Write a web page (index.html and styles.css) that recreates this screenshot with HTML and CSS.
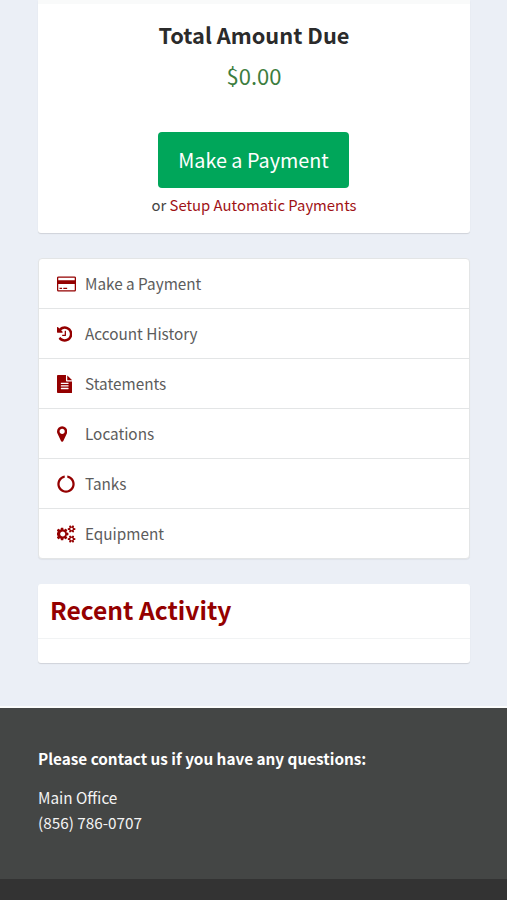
FILE: index.html
```
<!DOCTYPE html>
<html lang="en">
<head>
  <meta charset="UTF-8">
  <meta name="viewport" content="width=device-width, initial-scale=1.0">
  <title>My Account</title>
  <link rel="stylesheet" href="styles.css">
</head>
<body>
  <main class="content">
    <section class="box amount-box">
      <h3>Total Amount Due</h3>
      <p class="amount">$0.00</p>
      <a href="#" class="btn-pay">Make a Payment</a>
      <p class="auto-pay">or <a href="#">Setup Automatic Payments</a></p>
    </section>

    <nav class="account-menu">
      <a href="#">
        <span class="icon"><svg width="19" height="18" viewBox="0 0 1920 1792"><path d="M1760 128q66 0 113 47t47 113v1216q0 66-47 113t-113 47h-1600q-66 0-113-47t-47-113v-1216q0-66 47-113t113-47h1600zm-1600 128q-13 0-22.500 9.500t-9.500 22.500v224h1664v-224q0-13-9.500-22.500t-22.500-9.500h-1600zm1600 1280q13 0 22.500-9.500t9.500-22.500v-608h-1664v608q0 13 9.500 22.500t22.500 9.500h1600zm-1504-128v-128h256v128h-256zm384 0v-128h384v128h-384z"/></svg></span>
        Make a Payment
      </a>
      <a href="#">
        <span class="icon"><svg width="15.400" height="18" viewBox="128 0 1536 1792"><path d="M1664 896q0 156-61 298t-164 245-245 164-298 61q-172 0-327-72.500t-264-204.500q-7-10-6.500-22.500t8.500-20.500l137-138q10-9 25-9 16 2 23 12 73 95 179 147t225 52q104 0 198.500-40.500t163.500-109.500 109.500-163.500 40.500-198.500-40.500-198.500-109.500-163.500-163.500-109.500-198.500-40.500q-98 0-188 35.500t-160 101.500l137 138q31 30 14 69-17 40-59 40h-448q-26 0-45-19t-19-45v-448q0-42 40-59 39-17 69 14l130 129q107-101 244.500-156.500t284.500-55.500q156 0 298 61t245 164 164 245 61 298zm-640-288v448q0 14-9 23t-23 9h-320q-14 0-23-9t-9-23v-64q0-14 9-23t23-9h224v-352q0-14 9-23t23-9h64q14 0 23 9t9 23z"/></svg></span>
        Account History
      </a>
      <a href="#">
        <span class="icon"><svg width="15.400" height="18" viewBox="128 0 1536 1792"><path d="M1596 476q14 14 28 36h-472v-472q22 14 36 28zm-476 164h544v1056q0 40-28 68t-68 28h-1344q-40 0-68-28t-28-68v-1600q0-40 28-68t68-28h800v544q0 40 28 68t68 28zm160 736v-64q0-14-9-23t-23-9h-704q-14 0-23 9t-9 23v64q0 14 9 23t23 9h704q14 0 23-9t9-23zm0-256v-64q0-14-9-23t-23-9h-704q-14 0-23 9t-9 23v64q0 14 9 23t23 9h704q14 0 23-9t9-23zm0-256v-64q0-14-9-23t-23-9h-704q-14 0-23 9t-9 23v64q0 14 9 23t23 9h704q14 0 23-9t9-23z"/></svg></span>
        Statements
      </a>
      <a href="#">
        <span class="icon"><svg width="10.300" height="18" viewBox="384 0 1024 1792"><path d="M1152 640q0-106-75-181t-181-75-181 75-75 181 75 181 181 75 181-75 75-181zm256 0q0 109-33 179l-364 774q-16 33-47.500 52t-67.500 19-67.500-19-46.500-52l-365-774q-33-70-33-179 0-212 150-362t362-150 362 150 150 362z"/></svg></span>
        Locations
      </a>
      <a href="#">
        <span class="icon"><svg width="18" height="18" viewBox="0 0 1792 1792"><path d="M1760 896q0 176-68.500 336t-184 275.500-275.500 184-336 68.500-336-68.500-275.500-184-184-275.500-68.500-336q0-213 97-398.500t265-305.500 374-151v228q-221 45-366.500 221t-145.500 406q0 130 51 248.500t136.500 204 204 136.500 248.500 51 248.500-51 204-136.500 136.500-204 51-248.500q0-230-145.500-406t-366.500-221v-228q206 31 374 151t265 305.500 97 398.500z"/></svg></span>
        Tanks
      </a>
      <a href="#">
        <span class="icon"><svg width="19" height="18" viewBox="0 0 1920 1792"><path d="M832 896q0-106-75-181t-181-75-181 75-75 181 75 181 181 75 181-75 75-181zm768 512q0-52-38-90t-90-38-90 38-38 90q0 53 37.500 90.500t90.500 37.500 90.500-37.500 37.500-90.500zm0-1024q0-52-38-90t-90-38-90 38-38 90q0 53 37.500 90.500t90.500 37.500 90.500-37.500 37.500-90.500zm-448 421v185q0 10-7 19.500t-16 10.500l-155 24q-11 35-32 76 34 48 90 115 7 11 7 20 0 12-7 19-23 30-82.500 89.500t-78.500 59.500q-11 0-21-7l-115-90q-37 19-77 31-11 108-23 155-7 24-30 24h-186q-11 0-20-7.500t-10-17.500l-23-153q-34-10-75-31l-118 89q-7 7-20 7-11 0-21-8-144-133-144-160 0-9 7-19 10-14 41-53t47-61q-23-44-35-82l-152-24q-10-1-17-9.500t-7-19.500v-185q0-10 7-19.500t16-10.500l155-24q11-35 32-76-34-48-90-115-7-11-7-20 0-12 7-20 22-30 82-89t79-59q11 0 21 7l115 90q34-18 77-32 11-108 23-154 7-24 30-24h186q11 0 20 7.500t10 17.500l23 153q34 10 75 31l118-89q8-7 20-7 11 0 21 8 144 133 144 160 0 8-7 19-12 16-42 54t-45 60q23 48 34 82l152 23q10 2 17 10.500t7 19.500zm704 533v140q0 16-149 31-12 27-30 52 51 113 51 138 0 4-4 7-122 71-124 71-8 0-46-47t-52-68q-20 2-30 2t-30-2q-14 21-52 68t-46 47q-2 0-124-71-4-3-4-7 0-25 51-138-18-25-30-52-149-15-149-31v-140q0-16 149-31 13-29 30-52-51-113-51-138 0-4 4-7 4-2 35-20t59-34 30-16q8 0 46 46.500t52 67.500q20-2 30-2t30 2q51-71 92-112l6-2q4 0 124 70 4 3 4 7 0 25-51 138 17 23 30 52 149 15 149 31zm0-1024v140q0 16-149 31-12 27-30 52 51 113 51 138 0 4-4 7-122 71-124 71-8 0-46-47t-52-68q-20 2-30 2t-30-2q-14 21-52 68t-46 47q-2 0-124-71-4-3-4-7 0-25 51-138-18-25-30-52-149-15-149-31v-140q0-16 149-31 13-29 30-52-51-113-51-138 0-4 4-7 4-2 35-20t59-34 30-16q8 0 46 46.500t52 67.500q20-2 30-2t30 2q51-71 92-112l6-2q4 0 124 70 4 3 4 7 0 25-51 138 17 23 30 52 149 15 149 31z"/></svg></span>
        Equipment
      </a>
    </nav>

    <section class="box activity-box">
      <h2>Recent Activity</h2>
    </section>
  </main>

  <footer class="footer">
    <p class="footer-title">Please contact us if you have any questions:</p>
    <p>Main Office<br>(856) 786-0707</p>
  </footer>
  <div class="footer-bottom"></div>
</body>
</html>
```
FILE: styles.css
```
:root {
  --red: #940000;
  --green: #00a65a;
  --page-bg: #ebeff6;
  --line: #e3e5e6;
}

* {
  margin: 0;
  padding: 0;
  box-sizing: border-box;
}

body {
  font-family: 'Source Sans Pro', 'Noto Sans CJK SC', sans-serif;
  font-size: 15.3px;
  line-height: 25px;
  color: #444;
  background-color: var(--page-bg);
}

a {
  text-decoration: none;
}

.content {
  height: 706px;
  padding: 0 37px 0 38px;
}

.box {
  background-color: #fff;
  border-radius: 3px;
  box-shadow: 0 1px 1px rgba(0, 0, 0, 0.12);
}

.amount-box {
  height: 233px;
  padding-top: 17px;
  border-top: 4px solid #f9fafa;
  border-radius: 0 0 3px 3px;
  text-align: center;
}

.amount-box h3 {
  font-size: 21.8px;
  line-height: 28px;
  color: #2b2b2b;
}

.amount {
  margin-top: 12px;
  font-size: 22px;
  line-height: 28px;
  color: #3c7d3e;
}

.btn-pay {
  display: block;
  height: 56px;
  margin: 43px 121px 0 120px;
  border-radius: 4px;
  background-color: var(--green);
  color: #fff;
  font-size: 19.8px;
  line-height: 56px;
}

.auto-pay {
  margin-top: 4px;
  font-size: 14.85px;
}

.auto-pay a {
  color: #a01216;
}

.account-menu {
  margin-top: 25px;
  border: 1px solid var(--line);
  border-radius: 4px;
  background-color: #fff;
  box-shadow: 0 1px 1px rgba(0, 0, 0, 0.05);
}

.account-menu a {
  display: flex;
  align-items: center;
  height: 49px;
  padding-left: 18px;
  color: #5c5c5c;
}

.account-menu a + a {
  height: 50px;
  border-top: 1px solid var(--line);
}

.icon {
  display: flex;
  width: 28px;
}

.icon svg {
  fill: var(--red);
}

.activity-box {
  height: 79px;
  margin-top: 25px;
}

.activity-box h2 {
  height: 55px;
  padding-left: 12px;
  border-bottom: 1px solid #f1f3f4;
  font-size: 24.6px;
  line-height: 51px;
  color: var(--red);
}

.footer {
  height: 173px;
  padding: 38px 38px 0;
  border-top: 2px solid #fbfcfc;
  background-color: #444645;
  color: #f4f4f4;
}

.footer-title {
  margin-bottom: 14px;
  font-weight: 700;
  color: #fff;
}

.footer-bottom {
  height: 21px;
  background-color: #333;
}
```
